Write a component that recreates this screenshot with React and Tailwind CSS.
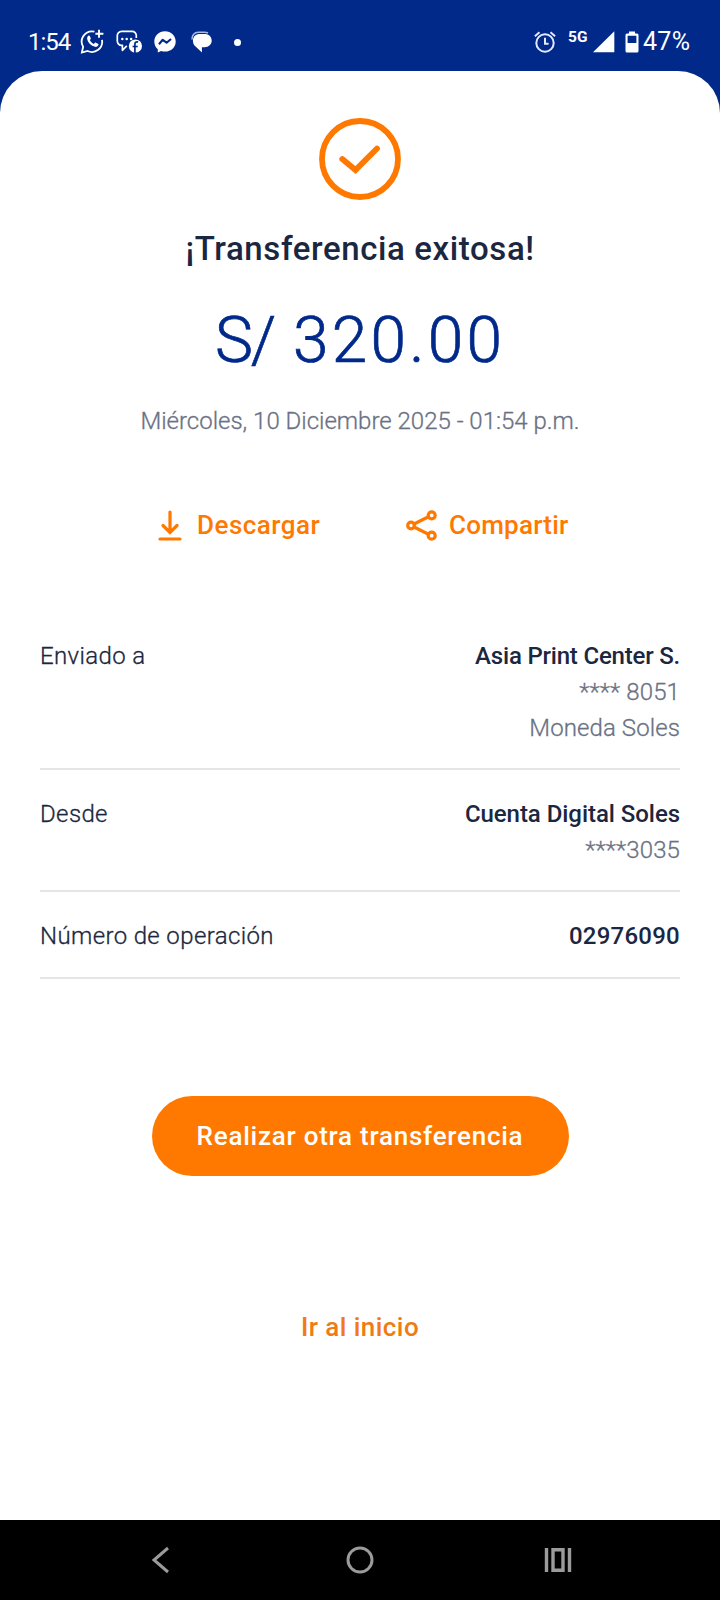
import React from "react";

function WhatsAppIcon() {
  return (
    <svg className="h-[26px] w-[26px]" viewBox="0 0 26 26" fill="none">
      <path d="M14.400 2.600C13.600 2.400 12.800 2.300 12 2.300A10.300 10.300 0 0 0 3.100 17.800L1.900 23.600L7.600 22A10.300 10.300 0 0 0 22 10.800" stroke="white" strokeWidth="1.800" />
      <path d="M19 0.800V8.800M15.400 4.800H23.400" stroke="white" strokeWidth="1.900" />
      <path d="M8.300 6.800c.5-.5 1.100-.4 1.500.3l.9 1.900c.2.500.1.900-.2 1.300l-.7.800c.9 1.800 2.100 3 4.100 3.900l.8-1c.3-.4.7-.5 1.200-.3l2.100 1c.6.300.7.800.4 1.400-.6 1.400-1.800 2-3.300 1.700-3.900-.8-7.100-3.900-7.900-7.700-.2-1.400.2-2.500 1.100-3.300z" fill="white" />
    </svg>
  );
}

function ChatFacebookIcon() {
  return (
    <svg className="h-[24px] w-[27px]" viewBox="0 0 27 24" fill="none">
      <path d="M20.300 8V5.600A4.200 4.200 0 0 0 16 1.300H5.600A4.300 4.300 0 0 0 1.300 5.600V11A4.300 4.300 0 0 0 5.600 15.300H6.400V20.300L10.800 15.900" stroke="white" strokeWidth="1.700" strokeLinejoin="round" />
      <circle cx="6.300" cy="9.100" r="1.250" fill="white" />
      <circle cx="10.700" cy="9.100" r="1.250" fill="white" />
      <circle cx="15.100" cy="9.100" r="1.250" fill="white" />
      <circle cx="19.400" cy="16" r="6.600" fill="white" />
      <path d="M18.900 23V14.200C18.900 12.300 19.900 11.600 22.100 11.900" stroke="#00298a" strokeWidth="1.700" />
      <path d="M16.600 16.500H21.700" stroke="#00298a" strokeWidth="1.600" />
    </svg>
  );
}

function MessengerIcon() {
  return (
    <svg className="h-[22px] w-[22px]" viewBox="0 0 22 22" fill="none">
      <path d="M11 0.200C4.900 0.200.3 4.600.3 10.500c0 3.200 1.300 5.900 3.500 7.800v3.200l3.300-1.500c1.200.4 2.500.6 3.900.6 6.100 0 10.700-4.200 10.700-10.100S17.100.2 11 .2z" fill="white" />
      <path d="M5 13.200L8.700 8.800L12.600 11.700L17 8" stroke="#00298a" strokeWidth="2.100" strokeLinejoin="round" />
    </svg>
  );
}

function MessagesIcon() {
  return (
    <svg className="h-[22px] w-[22px]" viewBox="0 0 22 22" fill="none">
      <path d="M1 8.500C.8 4 3.500 1.200 7.300 1.200h6.200c1.500 0 2.600.3 3.500.8" stroke="#a9b9e6" strokeWidth="1.600" />
      <path d="M9 3h4.500c4.300 0 7.200 2.600 7.200 6.600s-2.900 6.600-7.200 6.600h-2.600v5.300L4.300 15.300C2.700 14.100 1.900 12 1.900 9.600 1.900 5.600 4.700 3 9 3z" fill="white" />
    </svg>
  );
}

function AlarmIcon() {
  return (
    <svg className="h-[22px] w-[22px]" viewBox="0 0 22 22" fill="none" stroke="#e4eaff" strokeWidth="2">
      <circle cx="11" cy="12" r="8.700" />
      <path d="M11 6.800V12.800H14.600M0.900 5.200L5.500 1.300M21.100 5.200L16.500 1.300" />
    </svg>
  );
}

function StatusBar() {
  return (
    <header className="flex h-[71px] shrink-0 items-start justify-between px-[28px] pt-[30px] text-white">
      <div className="flex h-6 items-center">
        <span className="w-[43px] whitespace-nowrap text-[24px] leading-6 tracking-[-1px]">1:54</span>
        <div className="ml-[9px] flex"><WhatsAppIcon /></div>
        <div className="ml-[10px] flex"><ChatFacebookIcon /></div>
        <div className="ml-[11px] flex"><MessengerIcon /></div>
        <div className="ml-[15px] flex"><MessagesIcon /></div>
        <div className="ml-[21px] size-[7px] rounded-full bg-white" />
      </div>
      <div className="flex h-6 items-center">
        <AlarmIcon />
        <span className="ml-[12px] w-[20px] whitespace-nowrap pb-[10px] text-[15.500px] font-bold leading-4">5G</span>
        <svg className="ml-[5px] h-[22px] w-[22px]" viewBox="0 0 22 22"><path d="M21.300 0.300V21.300H0z" fill="white" /></svg>
        <svg className="ml-[10px] h-[22px] w-[14px]" viewBox="0 0 14 22">
          <path fillRule="evenodd" d="M4 .5h6v2h2a1.500 1.500 0 0 1 1.500 1.500V20A1.500 1.500 0 0 1 12 21.500H2A1.500 1.500 0 0 1 .5 20V4A1.500 1.500 0 0 1 2 2.500h2zM2.600 4.800V12h8.800V4.800z" fill="white" />
        </svg>
        <span className="ml-[4px] w-[49px] whitespace-nowrap text-[25px] leading-6 tracking-[0.300px]">47%</span>
      </div>
    </header>
  );
}

function Row({ label, title, titleClass, lines = [], className }) {
  return (
    <div className={`flex justify-between border-b-2 border-[#e5e5e7] pt-[26px] ${className}`}>
      <div className="text-[24px] font-light leading-9 tracking-[0.370px] text-[#1b2740] [-webkit-text-stroke:0.3px_#1b2740]">{label}</div>
      <div className="text-right leading-9">
        <div className={`text-[24px] font-medium text-[#1b2740] ${titleClass}`}>{title}</div>
        {lines.map((line) => (
          <div key={line} className="text-[24px] font-light tracking-[0.100px] text-[#6a7183] [-webkit-text-stroke:0.3px_#6a7183]">{line}</div>
        ))}
      </div>
    </div>
  );
}

export default function App() {
  return (
    <div className="flex h-[1600px] w-[720px] flex-col overflow-hidden bg-[#00298a] font-['Roboto','Liberation_Sans',sans-serif]">
      <StatusBar />
      <main className="flex grow flex-col items-center rounded-t-[42px] bg-white px-10 pt-[47px]">
        <svg className="h-[82px] w-[82px]" viewBox="0 0 82 82" fill="none" stroke="#ff7900" strokeWidth="5.800">
          <circle cx="41" cy="41" r="38" />
          <path d="M23.300 41L36.500 52L58 30.500" strokeLinecap="round" />
        </svg>
        <h1 className="mt-[29px] whitespace-nowrap text-[33px] font-medium leading-10 tracking-[0.600px] text-[#1b2740]">¡Transferencia exitosa!</h1>
        <p className="mt-[40px] whitespace-nowrap text-[64px] font-light leading-[64px] tracking-[3.200px] text-[#00298a] [-webkit-text-stroke:0.7px_#00298a]"><span className="tracking-[-2px]">S/</span> 320.00</p>
        <p className="mt-[32px] whitespace-nowrap text-[24px] font-light leading-8 text-[#6a7183] [-webkit-text-stroke:0.3px_#6a7183]">Miércoles, 10 Diciembre 2025 - 01:54 p.m.</p>
        <div className="mt-[68px] flex h-10 w-full items-center pl-[118px] text-[26px] font-medium leading-10 text-[#ff7900]">
          <button className="flex items-center gap-[15px]">
            <svg className="h-[31px] w-[24px]" viewBox="0 0 24 31" fill="none" stroke="#ff7900" strokeWidth="3.200" strokeLinecap="round">
              <path d="M12 2V22M5 15.500L12 22.500L19 15.500M2 29H22" />
            </svg>
            <span className="w-[124px] whitespace-nowrap text-left tracking-[0.500px]">Descargar</span>
          </button>
          <button className="ml-[85px] flex items-center gap-[12px]">
            <svg className="h-[31px] w-[31px]" viewBox="0 0 31 31" fill="none" stroke="#ff7900" strokeWidth="3.200">
              <circle cx="5" cy="15.500" r="3.300" />
              <circle cx="25.700" cy="5.300" r="3.500" />
              <circle cx="25.700" cy="25.700" r="3.500" />
              <path d="M8 14L22.500 6.800M8 17L22.500 24.200" />
            </svg>
            <span className="whitespace-nowrap tracking-[0.250px]">Compartir</span>
          </button>
        </div>
        <section className="mt-[67px] w-full">
          <Row label="Enviado a" title="Asia Print Center S." titleClass="tracking-[-0.200px]" lines={["**** 8051", "Moneda Soles"]} className="pb-[22px]" />
          <Row label="Desde" title="Cuenta Digital Soles" titleClass="tracking-[-0.050px]" lines={["****3035"]} className="pb-[22px]" />
          <Row label="Número de operación" title="02976090" titleClass="tracking-[0.250px]" className="pb-[23px]" />
        </section>
        <button className="mt-[117px] h-[80px] w-[417px] rounded-full bg-[#ff7900] text-[26px] font-medium leading-10 tracking-[0.750px] text-white">Realizar otra transferencia</button>
        <button className="mt-[131px] h-10 text-[26px] font-medium leading-10 tracking-[0.450px] text-[#f07b14]">Ir al inicio</button>
      </main>
      <nav className="flex h-20 shrink-0 items-center bg-black pl-[151px]">
        <svg className="h-[28px] w-[18px]" viewBox="0 0 18 28" fill="none" stroke="#9b9b9b" strokeWidth="3"><path d="M17 2L3 14L17 26" /></svg>
        <svg className="ml-[177px] h-[28px] w-[28px]" viewBox="0 0 28 28" fill="none" stroke="#9b9b9b" strokeWidth="3"><circle cx="14" cy="14" r="12" /></svg>
        <svg className="ml-[170px] h-[24px] w-[28px]" viewBox="0 0 28 24" fill="none" stroke="#9b9b9b" strokeWidth="3.400"><path d="M2.500 0V24M25.500 0V24M9 1.700H19V22.300H9Z" /></svg>
      </nav>
    </div>
  );
}
